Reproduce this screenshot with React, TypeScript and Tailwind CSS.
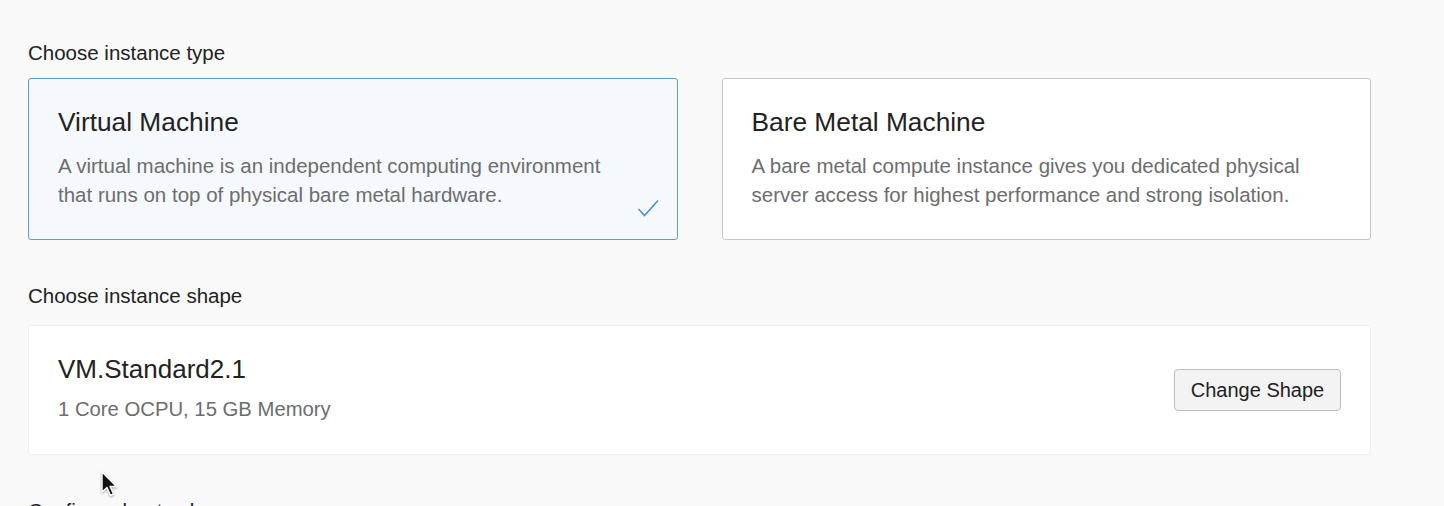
import React from 'react';

const font = { fontFamily: '"Liberation Sans", Arial, sans-serif' };

type TypeOption = { title: string; lines: string[]; selected?: boolean };

const types: TypeOption[] = [
  {
    title: 'Virtual Machine',
    lines: ['A virtual machine is an independent computing environment', 'that runs on top of physical bare metal hardware.'],
    selected: true,
  },
  {
    title: 'Bare Metal Machine',
    lines: ['A bare metal compute instance gives you dedicated physical', 'server access for highest performance and strong isolation.'],
  },
];

function Check() {
  return (
    <svg className="absolute right-[16px] bottom-[20px]" width="24" height="20" viewBox="0 0 24 20" fill="none">
      <polyline points="1.5,10 7.5,16.5 21,1.5" stroke="#4a8ee0" strokeWidth="1.6" strokeLinejoin="miter" />
    </svg>
  );
}

function Cursor() {
  return (
    <svg className="absolute left-[100px] top-[471px]" width="20" height="28" viewBox="0 0 20 28">
      <path d="M2 1 L2 21 L7 16.5 L10.5 24.5 L13.5 23 L10 15.5 L16.5 15.5 Z" fill="#111" stroke="#fff" strokeWidth="1.4" strokeLinejoin="round" style={{ filter: 'drop-shadow(0 1px 1px rgba(0,0,0,0.35))' }} />
    </svg>
  );
}

export default function App() {
  return (
    <div className="relative w-[1444px] h-[506px] overflow-hidden bg-[#f9f9f9] pl-[28px] pt-[41px]" style={font}>
      <div className="w-[1343px]">
        <div className="text-[20.5px] leading-[24px] text-[#222]">Choose instance type</div>
        <div className="grid grid-cols-2 gap-[44px] mt-[13px]">
          {types.map((t) => (
            <div
              key={t.title}
              className={
                t.selected
                  ? 'relative h-[162px] rounded-[3px] border border-[#5b9be6] bg-[#f5f9fd] px-[29px] pt-[27px]'
                  : 'relative h-[162px] rounded-[3px] border border-[#c2c5ca] bg-white px-[29px] pt-[27px]'
              }
            >
              <div className="text-[26.3px] leading-[32px] text-[#222]">{t.title}</div>
              <div className="mt-[13px] text-[20.5px] leading-[29px] text-[#6d6d6d] whitespace-nowrap">
                {t.lines.map((l) => (
                  <div key={l}>{l}</div>
                ))}
              </div>
              {t.selected && <Check />}
            </div>
          ))}
        </div>

        <div className="mt-[44px] text-[20.5px] leading-[24px] text-[#222]">Choose instance shape</div>
        <div className="mt-[17px] h-[130px] rounded-[3px] border border-[#efefef] bg-white pl-[29px] pr-[29px] pt-[27px] flex justify-between">
          <div>
            <div className="text-[26px] leading-[32px] text-[#222]">VM.Standard2.1</div>
            <div className="mt-[10px] text-[20.3px] leading-[29px] text-[#6d6d6d]">1 Core OCPU, 15 GB Memory</div>
          </div>
          <button className="mt-[16px] h-[42px] w-[167px] rounded-[4px] border border-[#b9bdc3] bg-[#f3f3f4] text-[20px] text-[#222]">
            Change Shape
          </button>
        </div>

        <div className="mt-[44px] text-[20.5px] leading-[24px] text-[#222]">Configure boot volume</div>
      </div>
      <Cursor />
    </div>
  );
}
